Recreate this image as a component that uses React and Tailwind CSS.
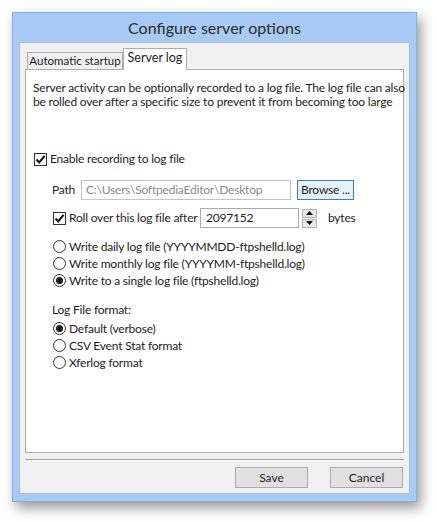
const font = { fontFamily: 'Lato, "Noto Sans", sans-serif' };

function CheckBox({ checked }) {
    return (
        <span className="flex h-[13px] w-[13px] shrink-0 items-center justify-center border border-[#333333] bg-white">
            {checked ? (
                <svg width="11" height="11" viewBox="0 0 11 11">
                    <path d="M1.5 5.5 L4.2 8.4 L9.6 1.8" fill="none" stroke="#111" strokeWidth="2" />
                </svg>
            ) : null}
        </span>
    );
}

function Radio({ checked }) {
    return (
        <span className="flex h-[13px] w-[13px] shrink-0 items-center justify-center rounded-full border border-[#333333] bg-white">
            {checked ? <span className="h-[7px] w-[7px] rounded-full bg-[#1a1a1a]" /> : null}
        </span>
    );
}

function Option({ label, checked, radio = true }) {
    return (
        <div className="flex h-[17px] items-center gap-[3px] whitespace-nowrap">
            {radio ? <Radio checked={checked} /> : <CheckBox checked={checked} />}
            <span>{label}</span>
        </div>
    );
}

function Spinner() {
    return (
        <div className="ml-[3px] flex h-[19px] w-[15px] flex-col gap-[1px]">
            <div className="flex h-[9px] items-center justify-center border border-[#b5b5b5] bg-[#e8e8e8]">
                <svg width="7" height="4" viewBox="0 0 7 4"><path d="M0 4 L3.5 0 L7 4 Z" fill="#111" /></svg>
            </div>
            <div className="flex h-[9px] items-center justify-center border border-[#b5b5b5] bg-[#e8e8e8]">
                <svg width="7" height="4" viewBox="0 0 7 4"><path d="M0 0 L3.5 4 L7 0 Z" fill="#111" /></svg>
            </div>
        </div>
    );
}

export default function App() {
    return (
        <div className="h-[522px] w-[437px] bg-white pl-[12px] pt-[12px] text-[12px] text-[#1e1e1e]" style={font}>
            <div className="flex h-[490px] w-[405px] flex-col border border-[#86aee0] bg-[#a8cbf5] px-[6px] pb-[7px] shadow-[4px_6px_12px_rgba(0,0,0,0.4)]">
                <div className="flex h-[29px] items-center justify-center text-[16px] text-[#2b2b2b]">
                    Configure server options
                </div>
                <div className="flex flex-1 flex-col border border-[#a9bcd4] bg-[#f0f0f0] px-[5px]">
                    {/* tabs */}
                    <div className="mt-[5px] flex h-[21px] items-end whitespace-nowrap pl-[2px]">
                        <div className="flex h-[17px] w-[96px] items-center justify-center border border-b-0 border-[#adadad] bg-[#f0f0f0] text-[11.5px]">
                            Automatic startup
                        </div>
                        <div className="relative z-10 -mb-px flex h-[22px] w-[64px] items-center justify-center border border-b-0 border-[#adadad] bg-white pb-[2px] text-[12.5px]">
                            Server log
                        </div>
                    </div>
                    <div className="h-[384px] whitespace-nowrap border border-[#adadad] bg-white pl-[8px] tracking-[-0.2px]">
                        <p className="-ml-px mt-[11px] leading-[14px]">
                            Server activity can be optionally recorded to a log file. The log file can also
                            <br />
                            be rolled over after a specific size to prevent it from becoming too large
                        </p>
                        <div className="mt-[42px] flex h-[16px] items-center gap-[3px]">
                            <CheckBox checked />
                            <span>Enable recording to log file</span>
                        </div>
                        <div className="ml-[18px] mt-[13px] flex h-[20px] items-center">
                            <span className="w-[29px]">Path</span>
                            <div className="flex h-[20px] w-[210px] items-center border border-[#c4c4c4] bg-white px-[4px] text-[#8a8a8a]">
                                C:\Users\SoftpediaEditor\Desktop
                            </div>
                            <div className="ml-[6px] flex h-[20px] w-[57px] items-center justify-center border border-[#3c7fb1] bg-[#e5f1fb]">
                                Browse ...
                            </div>
                        </div>
                        <div className="ml-[19px] mt-[8px] flex h-[20px] items-center">
                            <div className="flex w-[147px] items-center gap-[3px]">
                                <CheckBox checked />
                                <span>Roll over this log file after</span>
                            </div>
                            <div className="flex h-[20px] w-[99px] items-center border border-[#acacac] bg-white px-[5px]">
                                2097152
                            </div>
                            <Spinner />
                            <span className="ml-[11px]">bytes</span>
                        </div>
                        <div className="ml-[19px] mt-[10px]">
                            <Option label="Write daily log file (YYYYMMDD-ftpshelld.log)" />
                            <Option label="Write monthly log file (YYYYMM-ftpshelld.log)" />
                            <Option label="Write to a single log file (ftpshelld.log)" checked />
                        </div>
                        <div className="ml-[18px] mt-[14px] h-[14px] leading-[14px]">Log File format:</div>
                        <div className="ml-[19px] mt-[3px]">
                            <Option label="Default (verbose)" checked />
                            <Option label="CSV Event Stat format" />
                            <Option label="Xferlog format" />
                        </div>
                    </div>
                    <div className="mt-[6px] h-[2px] border-t border-[#a0a0a0] bg-white" />
                    <div className="mt-[6px] flex justify-end gap-[22px] pr-[1px]">
                        <div className="flex h-[21px] w-[73px] items-center justify-center border border-[#adadad] bg-[#e1e1e1]">
                            Save
                        </div>
                        <div className="flex h-[21px] w-[73px] items-center justify-center border border-[#adadad] bg-[#e1e1e1]">
                            Cancel
                        </div>
                    </div>
                </div>
            </div>
        </div>
    );
}
